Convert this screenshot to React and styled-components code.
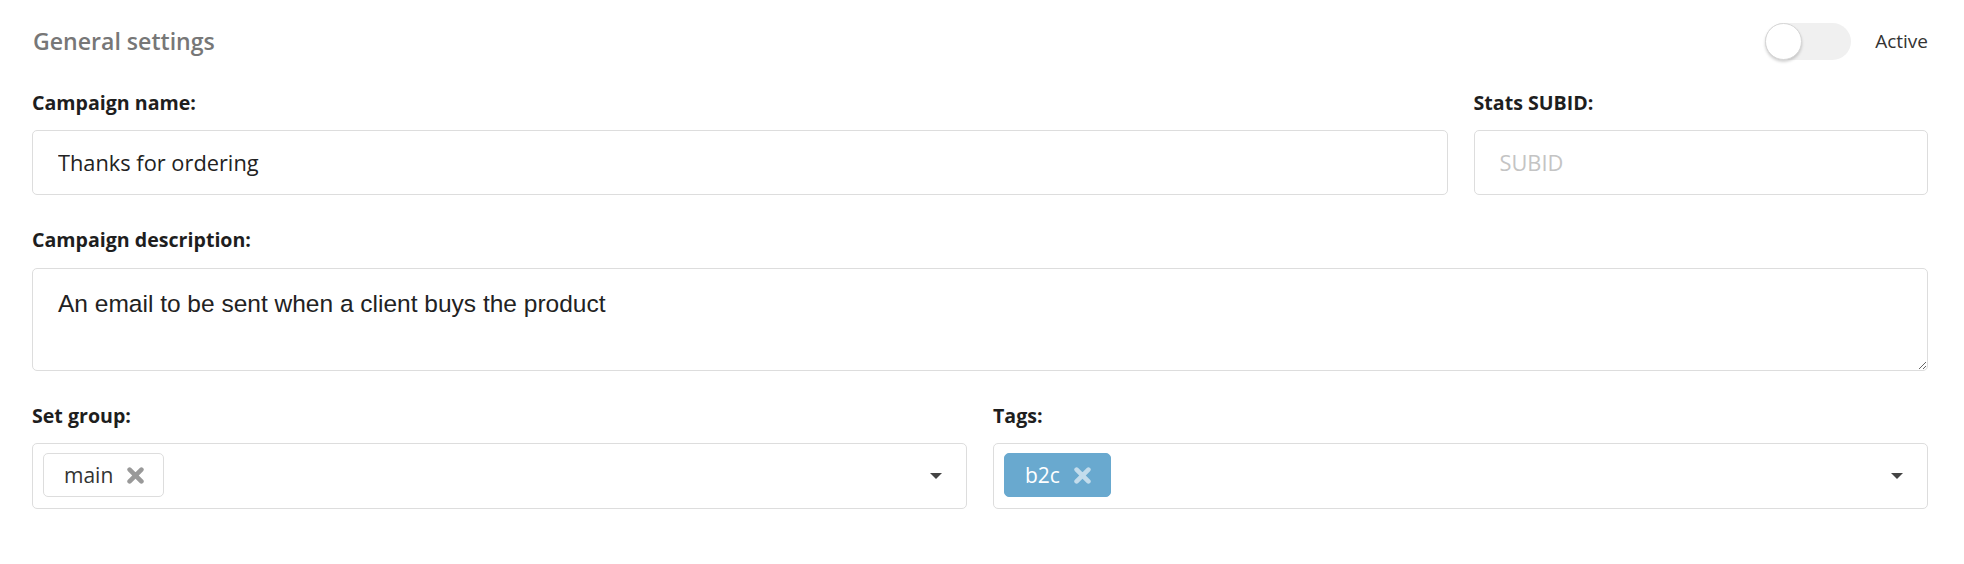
import React from "react";
import styled, { createGlobalStyle } from "styled-components";

const GlobalStyle = createGlobalStyle`
  html, body { margin: 0; padding: 0; background: #ffffff; }
  body { font-family: "Open Sans", "Noto Sans", sans-serif; color: #222; }
  * { box-sizing: border-box; }
`;

const Page = styled.div`
  padding: 21px 36px 40px 32px;
`;

const Header = styled.div`
  display: flex;
  align-items: center;
  justify-content: space-between;
  height: 40px;
  margin-bottom: 30px;
`;

const Title = styled.h2`
  margin: 0 0 0 1px;
  font-size: 23.1px;
  font-weight: 600;
  color: #777777;
`;

const StatusToggle = styled.label`
  display: flex;
  align-items: center;
  gap: 24px;
  font-size: 19px;
  color: #333;
`;

const Track = styled.span`
  position: relative;
  display: block;
  width: 86px;
  height: 37px;
  border-radius: 19px;
  background: #f0f0f0;
`;

const Knob = styled.span`
  position: absolute;
  left: 0;
  top: 0;
  width: 37px;
  height: 37px;
  border-radius: 50%;
  background: #fff;
  border: 1px solid #d6d6d6;
  box-shadow: 0 2px 3px rgba(0, 0, 0, 0.18);
`;

const Row = styled.div`
  display: grid;
  grid-template-columns: ${(p) => p.$cols};
  column-gap: 26px;
  margin-bottom: 33px;
`;

const Field = styled.div`
  display: flex;
  flex-direction: column;
  min-width: 0;
`;

const Label = styled.label`
  font-size: 19.6px;
  font-weight: 700;
  line-height: 24px;
  color: #1e1e1e;
  margin-bottom: 15px;
`;

const TextInput = styled.input`
  height: 65px;
  width: 100%;
  border: 1px solid #dddddd;
  border-radius: 5px;
  padding: 0 25px;
  font-family: "Open Sans", sans-serif;
  font-size: 21.8px;
  color: #222;
  background: #fff;
  outline: none;
  &::placeholder { color: #c4c4c4; }
`;

const TextArea = styled.textarea`
  height: 103px;
  width: 100%;
  margin-top: 1px;
  border: 1px solid #dddddd;
  border-radius: 5px;
  padding: 20px 25px;
  font-family: "Liberation Sans", Arial, sans-serif;
  font-size: 24.5px;
  line-height: 30px;
  color: #222;
  background: #fff;
  outline: none;
  display: block;
`;

const SelectBox = styled.div`
  position: relative;
  height: 66px;
  border: 1px solid #dddddd;
  border-radius: 5px;
  display: flex;
  align-items: center;
  padding: 0 60px 0 10px;
  background: #fff;
`;

const Chip = styled.span`
  display: inline-flex;
  align-items: center;
  gap: 14px;
  height: 44px;
  margin-top: -2px;
  padding: 0 19px 0 20px;
  border-radius: 5px;
  font-size: 21px;
  border: 1px solid ${(p) => (p.$tone === "blue" ? "#69a9cf" : "#dddddd")};
  background: ${(p) => (p.$tone === "blue" ? "#69a9cf" : "#ffffff")};
  color: ${(p) => (p.$tone === "blue" ? "#ffffff" : "#333333")};
`;

const Caret = styled.span`
  position: absolute;
  right: 24px;
  top: 50%;
  margin-top: -3px;
  width: 0;
  height: 0;
  border-left: 6px solid transparent;
  border-right: 6px solid transparent;
  border-top: 6px solid #444;
`;

function XIcon({ color }) {
  return (
    <svg width="17" height="17" viewBox="0 0 17 17" aria-hidden="true">
      <path
        d="M2.6 2.6 L14.4 14.4 M14.4 2.6 L2.6 14.4"
        stroke={color}
        strokeWidth="4.6"
        strokeLinecap="round"
      />
    </svg>
  );
}

export default function App() {
  return (
    <>
      <GlobalStyle />
      <Page>
        <Header>
          <Title>General settings</Title>
          <StatusToggle>
            <Track>
              <Knob />
            </Track>
            Active
          </StatusToggle>
        </Header>

        <Row $cols="calc((100% + 26px) * 0.75 - 26px) 1fr">
          <Field>
            <Label>Campaign name:</Label>
            <TextInput defaultValue="Thanks for ordering" />
          </Field>
          <Field>
            <Label>Stats SUBID:</Label>
            <TextInput placeholder="SUBID" />
          </Field>
        </Row>

        <Row $cols="1fr">
          <Field>
            <Label>Campaign description:</Label>
            <TextArea defaultValue="An email to be sent when a client buys the product" />
          </Field>
        </Row>

        <Row $cols="1fr 1fr">
          <Field>
            <Label>Set group:</Label>
            <SelectBox>
              <Chip>
                main
                <XIcon color="#999999" />
              </Chip>
              <Caret />
            </SelectBox>
          </Field>
          <Field>
            <Label>Tags:</Label>
            <SelectBox>
              <Chip $tone="blue">
                b2c
                <XIcon color="rgba(255,255,255,0.6)" />
              </Chip>
              <Caret />
            </SelectBox>
          </Field>
        </Row>
      </Page>
    </>
  );
}
